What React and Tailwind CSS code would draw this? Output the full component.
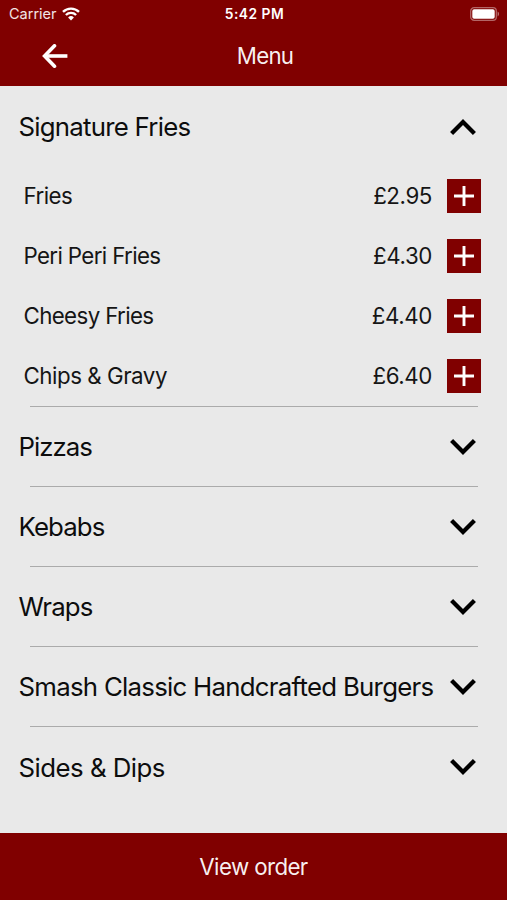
import React, { useState } from "react";

const sections = [
  {
    id: "signature",
    name: "Signature Fries",
    tracking: "tracking-[-0.75px]",
    items: [
      { name: "Fries", price: "£2.95", tracking: "tracking-[-0.55px]" },
      { name: "Peri Peri Fries", price: "£4.30", tracking: "tracking-[-0.64px]" },
      { name: "Cheesy Fries", price: "£4.40", tracking: "tracking-[-0.62px]" },
      { name: "Chips & Gravy", price: "£6.40", tracking: "tracking-[-0.46px]" },
    ],
  },
  { id: "pizzas", name: "Pizzas", tracking: "tracking-[-1px]", items: [] },
  { id: "kebabs", name: "Kebabs", tracking: "tracking-[-0.9px]", items: [] },
  { id: "wraps", name: "Wraps", tracking: "tracking-[-0.8px]", items: [] },
  { id: "burgers", name: "Smash Classic Handcrafted Burgers", tracking: "tracking-[-0.73px]", items: [] },
  { id: "sides", name: "Sides & Dips", tracking: "tracking-[-0.52px]", items: [] },
];

const WifiIcon = () => (
  <svg className="w-[18px] h-[14px]" viewBox="0 0 18 14" fill="none" stroke="white" strokeWidth="2.4">
    <path d="M1 4.9a11.4 11.4 0 0 1 16 0" />
    <path d="M3.9 8a7.3 7.3 0 0 1 10.2 0" />
    <path d="M9 13.4 6.1 10.4a4.2 4.2 0 0 1 5.8 0z" fill="white" stroke="none" />
  </svg>
);

const BatteryIcon = () => (
  <svg className="w-[30px] h-[14px]" viewBox="0 0 30 14" fill="none">
    <rect x="0.7" y="0.7" width="25.6" height="12.6" rx="3.4" stroke="white" strokeOpacity="0.4" strokeWidth="1.3" />
    <rect x="2.3" y="2.3" width="22.4" height="9.4" rx="1.8" fill="white" />
    <path d="M27.6 4.6c1.9.8 1.9 4 0 4.8z" fill="white" fillOpacity="0.45" />
  </svg>
);

const Chevron = ({ open }) => (
  <svg className={`w-[26px] h-4 shrink-0 ${open ? "rotate-180" : ""}`} viewBox="6 8.59 12 7.41">
    <path d="M16.59 8.59 12 13.17 7.41 8.59 6 10l6 6 6-6z" fill="black" />
  </svg>
);

const MenuItem = ({ item }) => (
  <li className="flex items-center h-[59.9px] pl-[23.5px] pr-[26px] text-[22.3px] text-[#151515]">
    <span className={`grow ${item.tracking}`}>{item.name}</span>
    <span className="tracking-[-0.4px]">{item.price}</span>
    <button aria-label={`Add ${item.name}`} className="ml-[15px] w-[34px] h-[34px] bg-[#800000]">
      <svg className="w-full h-full" viewBox="0 0 34 34" stroke="white" strokeWidth="2.9">
        <path d="M7 17h20M17 7v20" />
      </svg>
    </button>
  </li>
);

export default function App() {
  const [openId, setOpenId] = useState("signature");

  return (
    <div className="flex flex-col h-[900px] w-full overflow-hidden bg-[#e9e9e9] font-['Inter',sans-serif]">
      <header className="h-[86px] shrink-0 bg-[#800000] text-white">
        <div className="flex items-center h-[27px] pl-[9px] pr-[7px] leading-none">
          <div className="flex flex-1 items-center gap-[5px]">
            <span className="pt-px text-[14.5px] text-white/90">Carrier</span>
            <WifiIcon />
          </div>
          <span className="pt-[2px] text-[13.8px] font-semibold tracking-[0.5px]">5:42 PM</span>
          <div className="flex flex-1 justify-end">
            <BatteryIcon />
          </div>
        </div>
        <div className="grid grid-cols-3 items-center h-[58px]">
          <button aria-label="Back" className="ml-[42px] w-[26px]">
            <svg className="w-[26px] h-6" viewBox="0 0 26 24" fill="none" stroke="white" strokeWidth="3.6">
              <path d="M12.5 1.8 2.6 12l9.9 10.2" strokeLinecap="round" />
              <path d="M2.6 12h22.8" />
            </svg>
          </button>
          <h1 className="pl-[23px] text-center text-[22.3px] text-white/95 tracking-[-0.8px]">Menu</h1>
        </div>
      </header>

      <main className="grow pt-[0.9px]">
        {sections.map((s, i) => {
          const open = s.id === openId;
          return (
            <section key={s.id}>
              {i > 0 && <div className="h-px ml-[30px] mr-[29px] bg-[#ababab]" />}
              <button
                onClick={() => setOpenId(open ? null : s.id)}
                className="flex items-center justify-between w-full h-[79.2px] pt-px pl-[18.5px] pr-[31px] text-left"
              >
                <span className={`pt-px whitespace-nowrap text-[25.8px] text-[#0d0d0d] ${s.tracking}`}>{s.name}</span>
                <Chevron open={open} />
              </button>
              {open && (
                <ul>
                  {s.items.map((item) => (
                    <MenuItem key={item.name} item={item} />
                  ))}
                </ul>
              )}
            </section>
          );
        })}
      </main>

      <footer className="h-[67px] shrink-0 bg-[#800000]">
        <button className="w-full h-full text-[22.3px] text-white/95 tracking-[-0.6px]">View order</button>
      </footer>
    </div>
  );
}
